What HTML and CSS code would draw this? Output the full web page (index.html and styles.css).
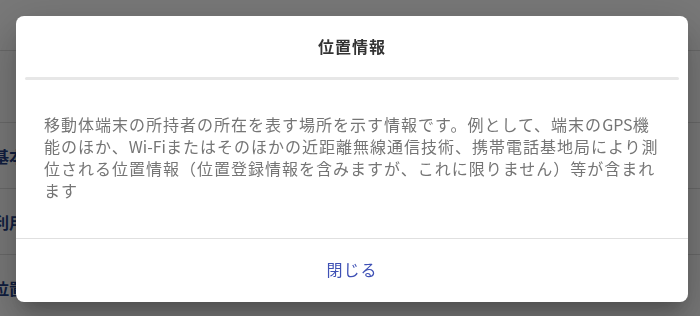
FILE: index.html
```html
<!DOCTYPE html>
<html lang="ja">
<head>
    <meta charset="UTF-8">
    <meta name="viewport" content="width=device-width, initial-scale=1.0">
    <title>位置情報</title>
    <link rel="stylesheet" href="styles.css">
</head>
<body>
    <!-- Page derrière la modale -->
    <div class="page">
        <div class="page-top"></div>
        <div class="page-row page-row-first"></div>
        <div class="page-row"><span class="row-label">基本</span></div>
        <div class="page-row"><span class="row-label">利用</span></div>
        <div class="page-row"><span class="row-label">位置</span></div>
    </div>

    <!-- Modale -->
    <div class="overlay">
        <div class="dialog">
            <div class="dialog-header">
                <h2 class="dialog-title">位置情報</h2>
            </div>
            <div class="dialog-divider"></div>
            <div class="dialog-body">
                <p>移動体端末の所持者の所在を表す場所を示す情報です。例として、端末の<span class="latin">GPS</span>機能のほか、<span class="latin">Wi-Fi</span>またはそのほかの近距離無線通信技術、携帯電話基地局により測位される位置情報（位置登録情報を含みますが、これに限りません）等が含まれます</p>
            </div>
            <div class="dialog-footer">
                <button class="dialog-close" type="button">閉じる</button>
            </div>
        </div>
    </div>
</body>
</html>
```

FILE: styles.css
```css
/* Base */
body {
    margin: 0;
    font-family: "Noto Sans CJK JP", "Noto Sans", sans-serif;
    background: #ffffff;
    overflow: hidden;
}

/* Page en arrière-plan */
.page {
    width: 700px;
}

.page-top {
    height: 50px;
    border-bottom: 1px solid #dedede;
}

.page-row {
    height: 65px;
    border-bottom: 1px solid #dedede;
    display: flex;
    align-items: center;
}

.page-row-first {
    height: 71px;
}

.row-label {
    margin-left: -7px;
    font-size: 16px;
    font-weight: bold;
    color: #233f86;
}

/* Voile sombre */
.overlay {
    position: fixed;
    top: 0;
    left: 0;
    right: 0;
    bottom: 0;
    background: rgba(0, 0, 0, 0.53);
    padding: 16px;
}

/* Boîte de dialogue */
.dialog {
    width: 672px;
    height: 286px;
    background: #ffffff;
    border-radius: 8px;
    display: flex;
    flex-direction: column;
    box-shadow: 0 11px 15px -7px rgba(0, 0, 0, 0.2),
                0 24px 38px 3px rgba(0, 0, 0, 0.14),
                0 9px 46px 8px rgba(0, 0, 0, 0.12);
}

.dialog-header {
    height: 61px;
    display: flex;
    align-items: center;
    justify-content: center;
    padding-bottom: 1px;
    box-sizing: border-box;
}

.dialog-title {
    margin: 0;
    font-size: 16px;
    font-weight: bold;
    letter-spacing: 1px;
    color: #333333;
}

.dialog-divider {
    height: 3px;
    margin: 0 9px;
    border-radius: 2px;
    background: #e7e7e7;
}

.dialog-body {
    padding: 33px 24px 0 28px;
    height: 125px;
}

.dialog-body p {
    margin: 0;
    font-size: 16px;
    line-height: 22px;
    letter-spacing: 1px;
    color: #757575;
}

.dialog-body .latin {
    letter-spacing: 0;
}

.dialog-footer {
    flex: 1;
    border-top: 1px solid #e0e0e0;
    display: flex;
    align-items: center;
    justify-content: center;
    padding-bottom: 3px;
}

.dialog-close {
    border: none;
    background: none;
    font-family: inherit;
    font-size: 16px;
    letter-spacing: 1px;
    color: #3f51b5;
    padding: 6px 12px;
    cursor: pointer;
}
```
